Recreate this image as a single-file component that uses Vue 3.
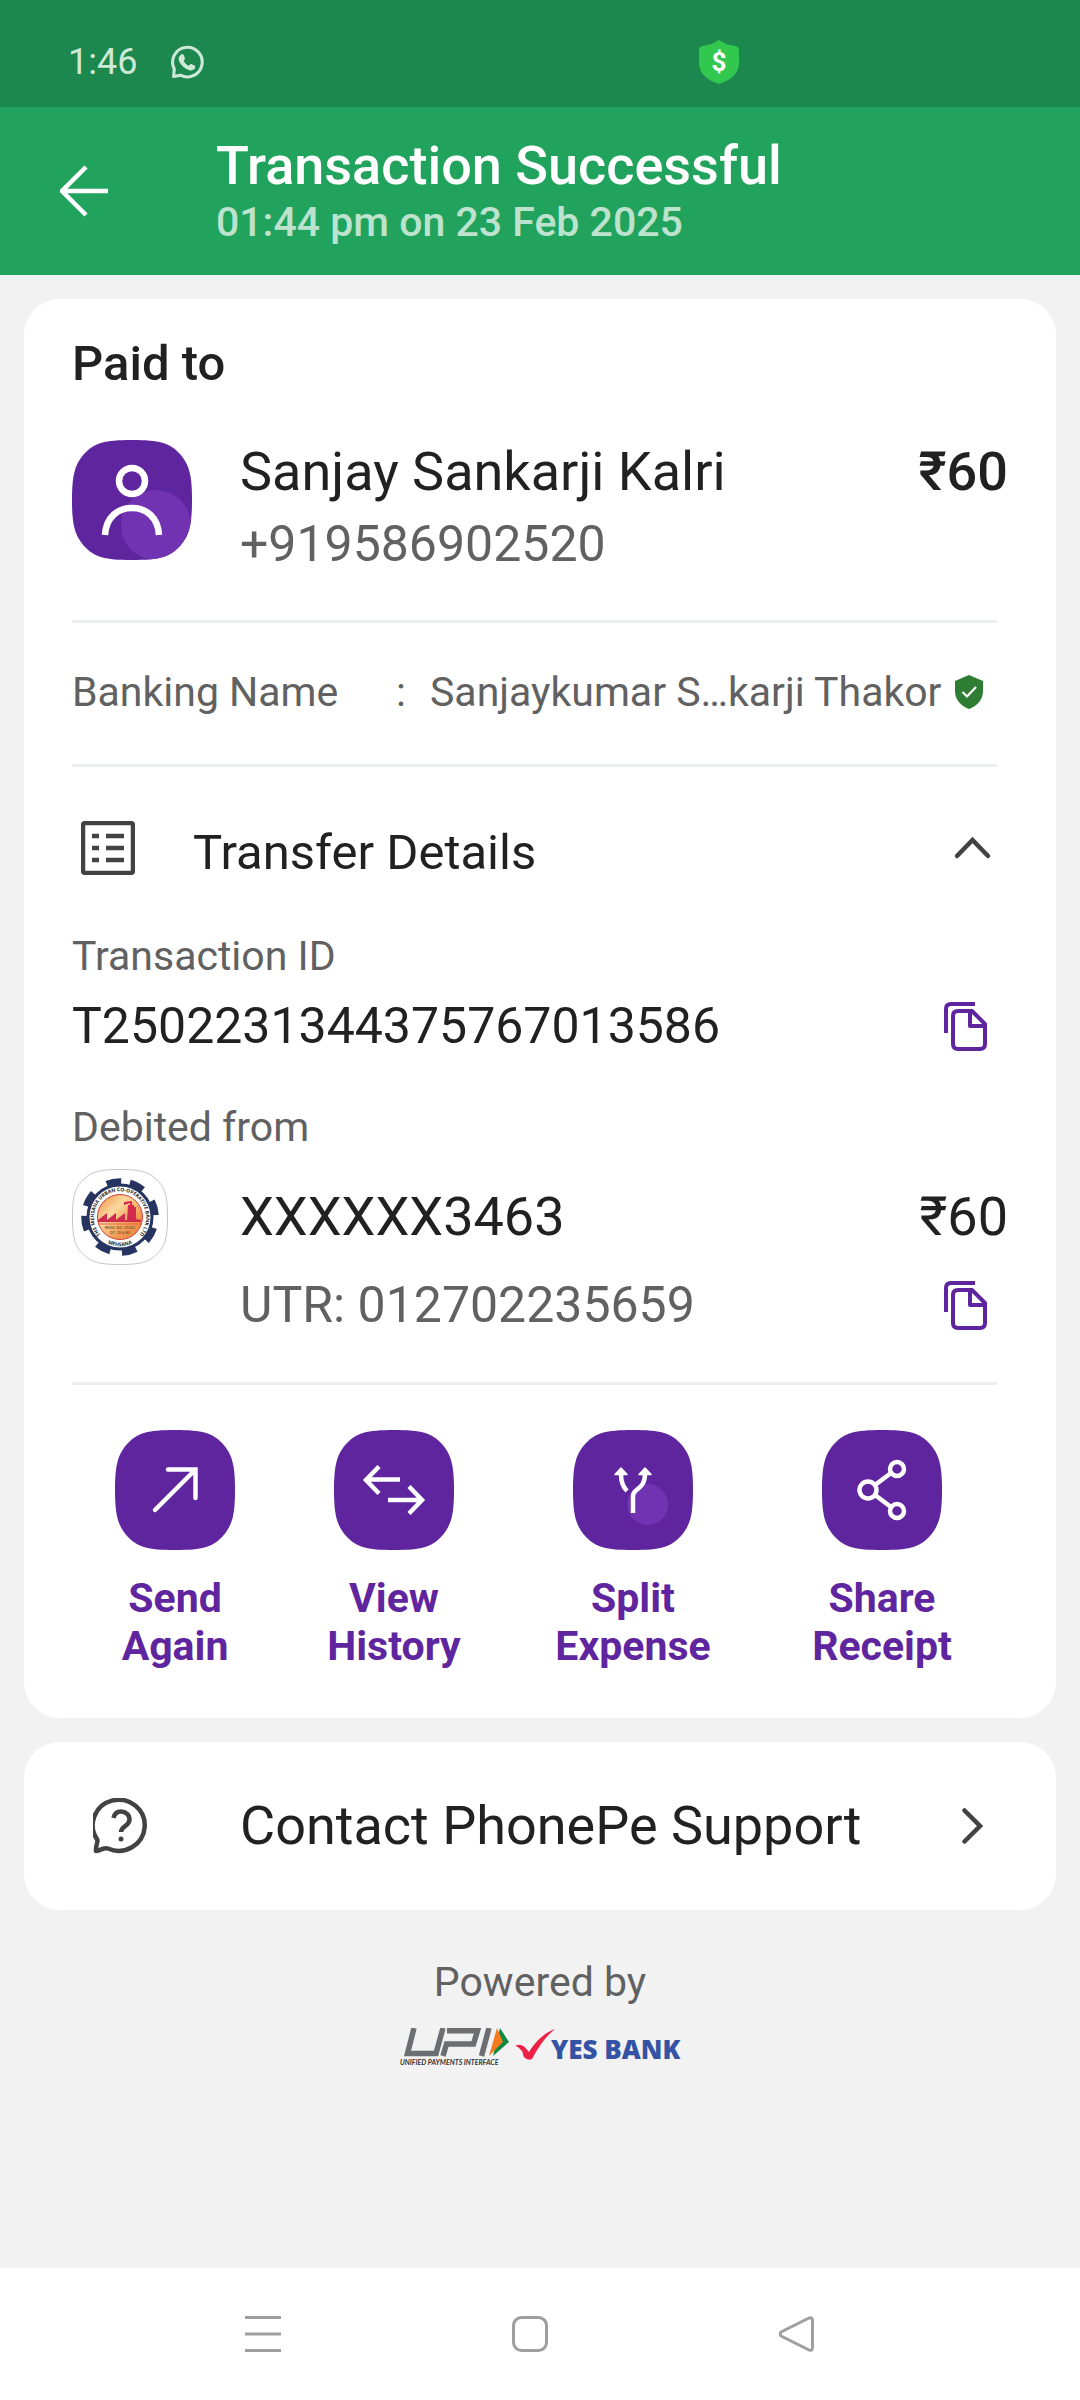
<script setup>
import { ref } from 'vue'

const detailsOpen = ref(true)

const actions = [
  { id: 'send', lines: ['Send', 'Again'] },
  { id: 'history', lines: ['View', 'History'] },
  { id: 'split', lines: ['Split', 'Expense'] },
  { id: 'share', lines: ['Share', 'Receipt'] },
]

// Angles of the gear teeth around the bank emblem
const teeth = [-10, 28, 75, 120, 165, 208, 260, 300]
</script>

<template>
  <div class="screen">
    <div class="status">
      <span class="clock">1:46</span>
      <svg class="whatsapp" viewBox="0 0 34 34" aria-label="WhatsApp">
        <path d="M3.600 31.500 L4.300 24 A14.800 14.800 0 1 1 10.500 30.200 Z" fill="none" stroke="#cfe9d9" stroke-width="3" stroke-linejoin="round" />
        <path d="M11.200 9.500 c1-.8 2-.5 2.500.6 l1.200 2.900 c.3.800-.1 1.300-1.200 2.700 c1.200 2.400 2.800 3.900 5.200 5.100 c1.200-1.500 1.700-2 2.500-1.700 l3 1.500 c1.200.6 1.100 1.500.5 2.700 c-.9 1.800-3.300 2.600-5.600 1.900 c-4.700-1.400-8.300-4.700-10.200-9 c-1-2.500-.3-5.200 2.100-6.700 Z" fill="#cfe9d9" />
      </svg>
      <svg class="pay-shield" viewBox="0 0 40 44" aria-label="Payment protection">
        <path d="M20 0 C25 3.500 31 5.500 36 6 Q40 6.500 40 10 V23 C40 34 31 40.500 20 44 C9 40.500 0 34 0 23 V10 Q0 6.500 4 6 C9 5.500 15 3.500 20 0 Z" fill="#32c850" />
        <text x="20" y="31" text-anchor="middle" class="dollar">$</text>
      </svg>
    </div>

    <header class="header">
      <button class="plain back" aria-label="Back">
        <svg width="48" height="52" viewBox="0 0 48 52"><path d="M26 2 L2 26 L26 50 M2 26 H48" fill="none" stroke="#fff" stroke-width="4.500" /></svg>
      </button>
      <div>
        <h1>Transaction Successful</h1>
        <p class="when">01:44 pm on 23 Feb 2025</p>
      </div>
    </header>

    <main>
      <section class="card">
        <h2>Paid to</h2>
        <div class="payee">
          <svg class="tile" viewBox="0 0 120 120" aria-hidden="true">
            <defs><clipPath id="squircle"><path d="M60 0 C88 0 97 3 107 13 C117 24 120 34 120 60 C120 86 117 96 107 107 C97 117 88 120 60 120 C32 120 23 117 13 107 C3 96 0 86 0 60 C0 34 3 24 13 13 C23 3 32 0 60 0 Z" /></clipPath></defs>
            <g clip-path="url(#squircle)">
              <rect width="120" height="120" fill="#5f259f" />
              <circle cx="84" cy="85" r="35" fill="#7133b1" />
            </g>
            <circle cx="60" cy="41" r="13" fill="none" stroke="#fff" stroke-width="6.500" />
            <path d="M33 95 C34 77 46 68 60 68 C74 68 86 77 87 95" fill="none" stroke="#fff" stroke-width="6.500" />
          </svg>
          <div class="grow">
            <p class="large">Sanjay Sankarji Kalri</p>
            <p class="phone">+919586902520</p>
          </div>
          <p class="large strong">₹60</p>
        </div>

        <div class="banking">
          <span class="banking-label">Banking Name</span>
          <span class="colon">:</span>
          <span>Sanjaykumar S…karji Thakor</span>
          <svg width="28" height="34" viewBox="0 0 28 34" aria-label="Verified"><path d="M14 0 L28 6 V16 C28 25 22 31 14 34 C6 31 0 25 0 16 V6 Z" fill="#2e7d32" /><path d="M7.500 17 L12 21.500 L21 12" fill="none" stroke="#fff" stroke-width="2.200" /></svg>
        </div>

        <button class="plain details-head" :aria-expanded="detailsOpen" @click="detailsOpen = !detailsOpen">
          <svg width="54" height="54" viewBox="0 0 54 54" aria-hidden="true">
            <rect x="2" y="2" width="50" height="50" rx="2" fill="none" stroke="#424242" stroke-width="4.500" />
            <path d="M11 15 H18 M25 15 H43 M11 27 H18 M25 27 H43 M11 39 H18 M25 39 H43" stroke="#424242" stroke-width="4.500" />
          </svg>
          <span class="details-title">Transfer Details</span>
          <svg width="35" height="54" viewBox="0 0 35 54" aria-hidden="true"><path d="M2 35 L17.500 19 L33 35" fill="none" stroke="#424242" stroke-width="4.500" stroke-linecap="round" /></svg>
        </button>

        <div v-if="detailsOpen" class="details">
          <p class="label">Transaction ID</p>
          <div class="copy-row txn">
            <span class="medium">T2502231344375767013586</span>
            <button class="plain copy" aria-label="Copy transaction ID">
              <svg width="43" height="49" viewBox="0 0 43 49"><path d="M2 31 V7 Q2 2 7 2 H31" /><path d="M14 9 H28 L41 22 V42 Q41 47 36 47 H14 Q9 47 9 42 V14 Q9 9 14 9 Z M26 9 V24 H41" /></svg>
            </button>
          </div>
          <p class="label debited">Debited from</p>
          <div class="account">
            <svg class="bank" viewBox="0 0 96 96" role="img" aria-label="The Mehsana Urban Co-operative Bank Ltd">
              <defs>
                <linearGradient id="sky" x1="0" y1="0" x2="1" y2="1"><stop offset="0" stop-color="#e98a3c" /><stop offset=".35" stop-color="#fbd9a0" /><stop offset=".65" stop-color="#f2a058" /><stop offset="1" stop-color="#ea7a35" /></linearGradient>
                <path id="arc-top" d="M29 66 A26 26 0 1 1 67 66" />
                <path id="arc-bottom" d="M30 71 A29.500 29.500 0 0 0 66 71" />
              </defs>
              <path d="M48 .5 C69 .5 77 3 85 11 C93 19 95.500 27 95.500 48 C95.500 69 93 77 85 85 C77 93 69 95.500 48 95.500 C27 95.500 19 93 11 85 C3 77 .5 69 .5 48 C.5 27 3 19 11 11 C19 3 27 .5 48 .5 Z" fill="#fff" stroke="#c4c4c4" />
              <path v-for="a in teeth" :key="a" d="M-8 -38 A39 39 0 0 1 8 -38 L6.500 -31 H-6.500 Z" fill="#27345f" :transform="`translate(48 48) rotate(${a})`" />
              <circle cx="48" cy="48" r="32" fill="#fff" stroke="#27345f" stroke-width="3" />
              <circle cx="48" cy="48" r="22.500" fill="url(#sky)" stroke="#c8403a" stroke-width="1" />
              <path d="M26 51 L35 44 V51 L44 44 V51 L53 44 V51 H55 L56 36 H58 V34 L52 36 V33 L60 32 V36 H62 V38 H64 V50 L69 51 V53 H26 Z" fill="#d12a4e" />
              <path d="M26 55 H70" stroke="#e8673c" stroke-width="1" />
              <text class="arc-text"><textPath href="#arc-top" startOffset="50%" text-anchor="middle">THE MEHSANA URBAN CO-OPERATIVE BANK LTD</textPath></text>
              <text class="arc-text"><textPath href="#arc-bottom" startOffset="50%" text-anchor="middle">MEHSANA</textPath></text>
              <text x="48" y="60" text-anchor="middle" class="regd">REGD. NO. 20352</text>
              <text x="48" y="65" text-anchor="middle" class="regd">DT. 20-6-83</text>
            </svg>
            <span class="large grow">XXXXXX3463</span>
            <span class="large">₹60</span>
          </div>
          <div class="copy-row utr">
            <span class="medium grey">UTR: 012702235659</span>
            <button class="plain copy" aria-label="Copy UTR">
              <svg width="43" height="49" viewBox="0 0 43 49"><path d="M2 31 V7 Q2 2 7 2 H31" /><path d="M14 9 H28 L41 22 V42 Q41 47 36 47 H14 Q9 47 9 42 V14 Q9 9 14 9 Z M26 9 V24 H41" /></svg>
            </button>
          </div>
        </div>

        <div class="actions">
          <button v-for="action in actions" :key="action.id" class="plain action">
            <svg class="tile" viewBox="0 0 120 120" aria-hidden="true">
              <g clip-path="url(#squircle)">
                <rect width="120" height="120" fill="#5f259f" />
              </g>
              <g v-if="action.id === 'send'" fill="none" stroke="#fff" stroke-width="4.500">
                <path d="M40 80 L80 40 M53 39.500 H80.500 V68" stroke-linecap="round" />
              </g>
              <g v-else-if="action.id === 'history'" fill="none" stroke="#fff" stroke-width="4.500">
                <path d="M66 49.500 H33 M45 36.500 L32 50 L45 63.500 M54 70 H87 M75 56.500 L88 70 L75 83.500" />
              </g>
              <g v-else-if="action.id === 'split'" fill="none" stroke="#fff" stroke-width="4.500">
                <circle cx="74.500" cy="74.500" r="20.500" fill="#7133b1" stroke="none" />
                <path d="M60 83 V66 C60 58 72 60 72 44 M54 61 C50 57 48 52 48 44" />
                <path d="M48 38 L54 44.500 H42 Z M72 38 L78 44.500 H66 Z" fill="#fff" stroke-width="1.500" stroke-linejoin="round" />
              </g>
              <g v-else fill="none" stroke="#fff" stroke-width="4.500">
                <circle cx="46" cy="60" r="8.500" />
                <circle cx="75" cy="39" r="7" />
                <circle cx="75" cy="81" r="7" />
                <path d="M53 55 L69 43 M53 65 L69 77" />
              </g>
            </svg>
            <span class="action-label">{{ action.lines[0] }}<br />{{ action.lines[1] }}</span>
          </button>
        </div>
      </section>

      <a href="#support" class="card support">
        <svg width="56" height="56" viewBox="0 0 56 56" aria-hidden="true">
          <path d="M3 53 C2.500 48 4.500 46 4.500 42 A26 25.500 0 1 1 15 50.500 C11 49 8 52.500 3 53 Z" fill="none" stroke="#424242" stroke-width="4.500" stroke-linejoin="round" />
          <path d="M20.500 20 C21.500 15.500 24 13.500 28 13.500 C33 13.500 36.500 17 36.500 21.500 C36.500 28.500 28 27.500 28 34" fill="none" stroke="#424242" stroke-width="4.500" />
          <circle cx="28" cy="41" r="2.500" fill="#424242" />
        </svg>
        <span class="large grow">Contact PhonePe Support</span>
        <svg width="21" height="36" viewBox="0 0 21 36" aria-hidden="true"><path d="M2.500 2.500 L18 18 L2.500 33.500" fill="none" stroke="#424242" stroke-width="4.500" stroke-linecap="round" /></svg>
      </a>

      <footer class="powered">
        <p class="label">Powered by</p>
        <div class="logos">
          <svg width="110" height="40" viewBox="0 0 110 40" role="img" aria-label="UPI">
            <g fill="none" stroke="#6d6e71" stroke-width="5.500">
              <path d="M14 0 L7.500 25.500 H36 L43 0" />
              <path d="M43 28 L46.500 16 H73.500 L77.500 2.800 H47" />
              <path d="M89 0 L81.500 28" />
            </g>
            <path d="M100 0 L109 14 L93 28 Z" fill="#0e8a43" />
            <path d="M97 0 L103 14 L89 28 Z" fill="#f47b20" />
            <text x="0" y="37" class="upi-sub">UNIFIED PAYMENTS INTERFACE</text>
          </svg>
          <svg width="166" height="40" viewBox="0 0 166 40" role="img" aria-label="YES BANK">
            <path d="M0 18 C5 15 9 17 14 24 C20 14 29 5 40 1 C30 9 23 20 17 31 Q14 33 10 30 C7 27 9 24 5 21 Q3 18 0 18 Z" fill="#ec2247" />
            <text x="36" y="31" class="yes">YES BANK</text>
          </svg>
        </div>
      </footer>
    </main>

    <nav class="navbar" aria-label="System navigation">
      <button class="plain" aria-label="Recent apps"><svg width="36" height="36" viewBox="0 0 36 36"><path d="M0 1.500 H36 M0 18 H36 M0 34.500 H36" /></svg></button>
      <button class="plain" aria-label="Home"><svg width="36" height="36" viewBox="0 0 36 36"><rect x="1.500" y="1.500" width="33" height="33" rx="8" /></svg></button>
      <button class="plain" aria-label="Back"><svg width="36" height="36" viewBox="0 0 36 36"><path d="M29 2.500 Q33.500 0 33.500 5 V31 Q33.500 36 29 33.500 L3 20.500 Q-1 18 3 15.500 Z" /></svg></button>
    </nav>
  </div>
</template>

<style>
body {
  margin: 0;
  background: #f2f2f2;
}
</style>

<style scoped>
.screen {
  display: flex;
  flex-direction: column;
  min-height: 100vh;
  background: #f2f2f2;
  color: #212121;
  font-family: Roboto, "Noto Sans", sans-serif;
}
h1, h2, p {
  margin: 0;
}
svg {
  display: block;
  flex: none;
}
.plain {
  display: flex;
  margin: 0;
  padding: 0;
  border: 0;
  background: none;
  color: inherit;
  font: inherit;
  cursor: pointer;
}
.grow {
  flex: 1;
}

.status {
  display: flex;
  align-items: center;
  box-sizing: border-box;
  height: 107px;
  padding: 17px 68px 0;
  background: #1d884d;
}
.clock {
  width: 102px;
  color: #cfe9d9;
  font-size: 36px;
  line-height: 44px;
}
.whatsapp {
  width: 34px;
  height: 34px;
}
.pay-shield {
  width: 40px;
  height: 44px;
  margin-left: 495px;
}
.dollar {
  fill: #fff;
  font: 700 26px Roboto, sans-serif;
}

.header {
  display: flex;
  align-items: center;
  height: 168px;
  padding: 0 60px;
  background: #22a35d;
  color: #fff;
}
.back {
  width: 156px;
}
h1 {
  font-size: 54px;
  font-weight: 500;
  line-height: 60px;
}
.when {
  margin-top: 2px;
  color: #bde3ce;
  font-size: 41px;
  font-weight: 500;
  line-height: 48px;
}

main {
  display: flex;
  flex-direction: column;
  gap: 24px;
  padding: 24px 24px 48px;
}
.card {
  padding: 37px 48px 48px;
  border-radius: 36px;
  background: #fff;
}
h2 {
  margin-bottom: 48px;
  font-size: 49px;
  font-weight: 500;
  line-height: 56px;
}
.large {
  font-size: 54px;
  line-height: 64px;
}
.strong {
  font-weight: 500;
}
.medium {
  font-size: 50px;
  line-height: 56px;
}
.grey {
  color: #616161;
}
.label {
  color: #616161;
  font-size: 41px;
  line-height: 48px;
}
.tile {
  width: 120px;
  height: 120px;
}

.payee {
  display: flex;
  align-items: flex-start;
  padding-bottom: 44px;
}
.payee .grow {
  padding-left: 48px;
}
.phone {
  margin-top: 8px;
  color: #616161;
  font-size: 50px;
  line-height: 64px;
}

.banking {
  display: flex;
  align-items: center;
  margin-right: 11px;
  padding: 45px 0 48px;
  border: solid #eceeee;
  border-width: 3px 0;
  color: #616161;
  font-size: 41px;
  line-height: 48px;
  white-space: nowrap;
}
.banking-label {
  width: 324px;
}
.colon {
  width: 34px;
}
.banking svg {
  margin-left: 13px;
}

.details-head {
  align-items: flex-start;
  width: 100%;
  height: 60px;
  margin-top: 54px;
  padding: 0 18px 0 9px;
  text-align: left;
}
.details-title {
  flex: 1;
  align-self: flex-end;
  padding-left: 58px;
  font-size: 49px;
  line-height: 56px;
}
.details {
  margin-top: 51px;
}
.copy-row {
  display: flex;
  align-items: center;
  justify-content: space-between;
  padding-right: 21px;
}
.copy path {
  fill: none;
  stroke: #5f259f;
  stroke-width: 4;
  stroke-linejoin: round;
}
.txn {
  margin-top: 18px;
}
.debited {
  margin-top: 49px;
}
.account {
  display: flex;
  align-items: center;
  margin-top: 18px;
}
.account .grow {
  padding-left: 72px;
}
.bank {
  width: 96px;
  height: 96px;
}
.arc-text {
  fill: #222;
  font: 700 5px "Open Sans", sans-serif;
}
.regd {
  fill: #5c3a22;
  font: 4px Roboto, sans-serif;
}
.utr {
  margin-top: 12px;
  padding-left: 168px;
}

.actions {
  display: grid;
  grid-template-columns: 206fr 232fr 246fr 252fr;
  margin-top: 49px;
  padding-top: 48px;
  background: linear-gradient(#eceeee, #eceeee) no-repeat 0 0 / calc(100% - 11px) 3px;
}
.action {
  flex-direction: column;
  align-items: center;
  gap: 24px;
}
.action-label {
  color: #5f259f;
  font-size: 41px;
  font-weight: 700;
  line-height: 48px;
  text-align: center;
}

.support {
  display: flex;
  align-items: center;
  box-sizing: border-box;
  min-height: 168px;
  padding: 0 73px 0 69px;
  color: inherit;
  text-decoration: none;
}
.support .grow {
  padding-left: 91px;
}

.powered {
  display: flex;
  flex-direction: column;
  align-items: center;
  gap: 22px;
  padding-top: 24px;
}
.logos {
  display: flex;
  gap: 5px;
}
.upi-sub {
  fill: #333;
  font: italic 700 7px Lato, sans-serif;
}
.yes {
  fill: #3553a4;
  font: 800 26px "Open Sans", sans-serif;
}

.navbar {
  display: flex;
  justify-content: center;
  gap: 231px;
  margin-top: auto;
  padding: 48px 20px 48px 0;
  background: #fff;
}
.navbar svg {
  fill: none;
  stroke: #9e9e9e;
  stroke-width: 3;
}
</style>
